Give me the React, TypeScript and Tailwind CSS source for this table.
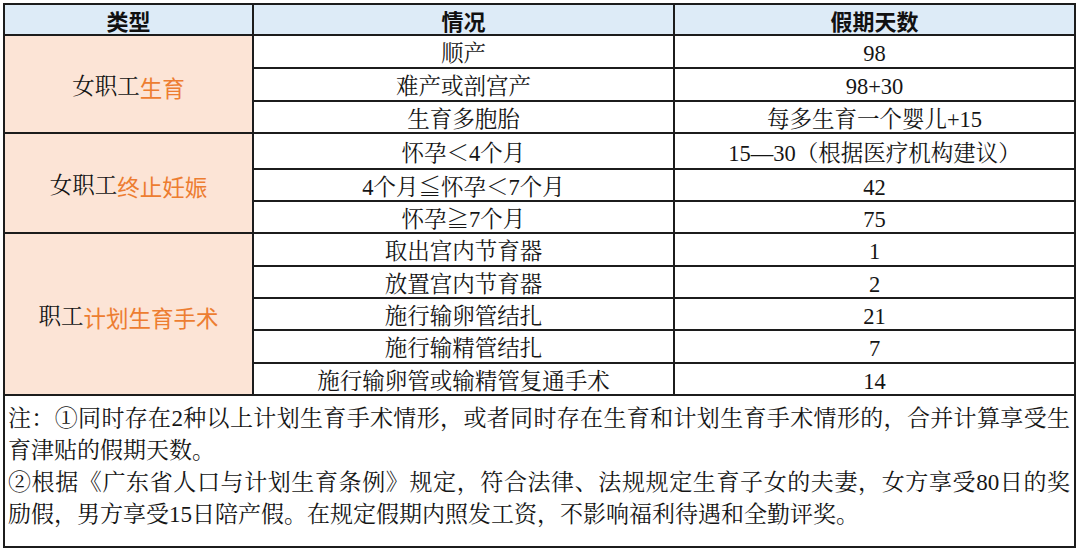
type Group = {
  black: string;
  orange: string;
  rows: [string, string][];
};

const groups: Group[] = [
  {
    black: '女职工',
    orange: '生育',
    rows: [
      ['顺产', '98'],
      ['难产或剖宫产', '98+30'],
      ['生育多胞胎', '每多生育一个婴儿+15'],
    ],
  },
  {
    black: '女职工',
    orange: '终止妊娠',
    rows: [
      ['怀孕＜4个月', '15—30（根据医疗机构建议）'],
      ['4个月≦怀孕＜7个月', '42'],
      ['怀孕≧7个月', '75'],
    ],
  },
  {
    black: '职工',
    orange: '计划生育手术',
    rows: [
      ['取出宫内节育器', '1'],
      ['放置宫内节育器', '2'],
      ['施行输卵管结扎', '21'],
      ['施行输精管结扎', '7'],
      ['施行输卵管或输精管复通手术', '14'],
    ],
  },
];

const serif = "font-['Liberation_Serif','Noto_Serif_CJK_SC','Noto_Sans_CJK_SC',serif]";
const sans = "font-['Noto_Sans_CJK_SC','Noto_Sans',sans-serif]";

function HeaderCell({ children }: { children: string }) {
  return (
    <div className={`flex items-center justify-center bg-[#ddebf7] text-[22px] font-bold leading-none text-[#111] ${sans}`}>
      {children}
    </div>
  );
}

function DataCell({ children }: { children: string }) {
  return (
    <div className={`flex items-center justify-center bg-white pt-[6px] text-[22.5px] leading-none text-[#151515] ${serif}`}>
      {children}
    </div>
  );
}

export default function App() {
  return (
    <div className="min-h-[552px] w-[1080px] bg-white pl-[3px] pt-[3px]">
      <div className="grid w-[1073px] grid-cols-[247px_419px_399px] grid-rows-[29px_31px_31px_30px_34px_30px_30px_31px_30px_30px_31px_30px_150px] gap-[2px] bg-[#1c1c1c] p-[2px]">
        <HeaderCell>类型</HeaderCell>
        <HeaderCell>情况</HeaderCell>
        <HeaderCell>假期天数</HeaderCell>

        {groups.map((group) => (
          <>
            <div
              key={group.orange}
              className={`flex items-center justify-center bg-[#fce4d6] pt-[6px] text-[22.5px] leading-none ${group.rows.length === 3 ? 'row-span-3' : 'row-span-5'}`}
            >
              <span className={`text-[#151515] ${serif}`}>{group.black}</span>
              <span className={`text-[#ed7d31] ${sans}`}>{group.orange}</span>
            </div>
            {group.rows.map(([situation, days]) => (
              <>
                <DataCell key={situation}>{situation}</DataCell>
                <DataCell key={situation + days}>{days}</DataCell>
              </>
            ))}
          </>
        ))}

        {/* notes */}
        <div className={`col-span-3 bg-white pl-[3px] pr-[4px] pt-[7px] text-[23px] leading-[32px] text-[#151515] ${serif}`}>
          <div className="text-justify [text-align-last:justify]">
            注：①同时存在2种以上计划生育手术情形，或者同时存在生育和计划生育手术情形的，合并计算享受生
          </div>
          <div>育津贴的假期天数。</div>
          <div className="text-justify [text-align-last:justify]">
            ②根据《广东省人口与计划生育条例》规定，符合法律、法规规定生育子女的夫妻，女方享受80日的奖
          </div>
          <div>励假，男方享受15日陪产假。在规定假期内照发工资，不影响福利待遇和全勤评奖。</div>
        </div>
      </div>
    </div>
  );
}
